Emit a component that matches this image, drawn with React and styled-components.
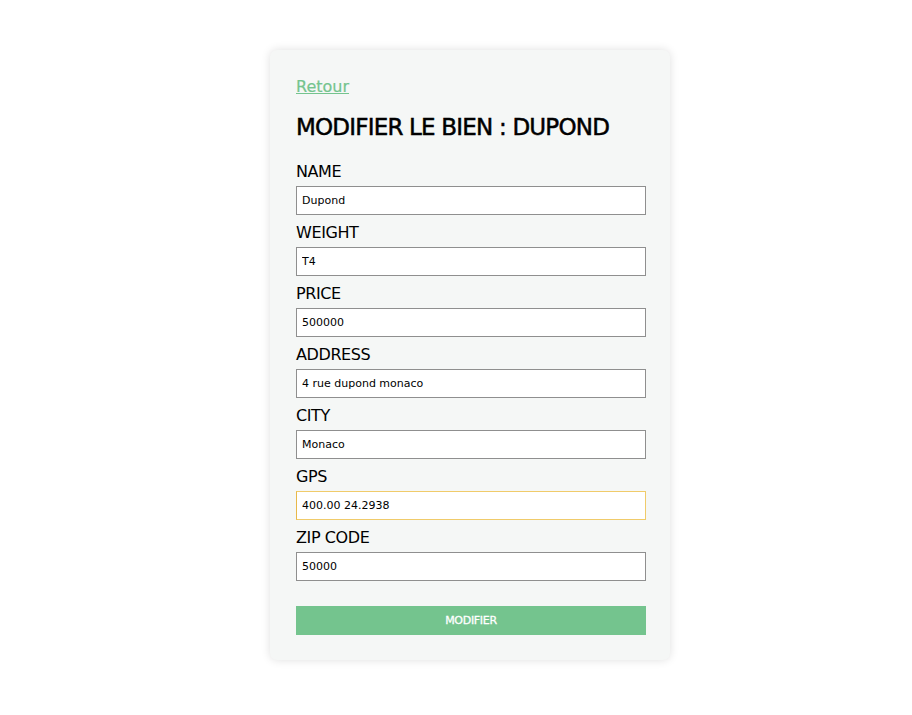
import React from 'react';
import styled, { createGlobalStyle } from 'styled-components';

const GlobalStyle = createGlobalStyle`
  body {
    margin: 0;
    background: #ffffff;
    font-family: "DejaVu Sans", "Noto Sans", sans-serif;
  }
`;

const Page = styled.div`
  display: flex;
  justify-content: center;
  padding: 50px 0 55px 28px;
`;

const Card = styled.div`
  width: 400px;
  box-sizing: border-box;
  padding: 25px 24px 25px 26px;
  background: #f5f7f6;
  border-radius: 7px;
  box-shadow: 0 0 10px rgba(0, 0, 0, 0.13);
`;

const BackLink = styled.a`
  display: inline-block;
  font-size: 16px;
  line-height: 23px;
  color: #74c48e;
  text-decoration: underline;
  -webkit-text-stroke: 0.2px #74c48e;
  cursor: pointer;
`;

const Title = styled.h1`
  margin: 11px 0 15px;
  font-size: 23px;
  line-height: 36px;
  font-weight: 500;
  letter-spacing: -0.8px;
  color: #000;
  -webkit-text-stroke: 0.5px #000;
`;

const Field = styled.div`
  display: flex;
  flex-direction: column;
  margin-bottom: 6px;
`;

const Label = styled.label`
  font-size: 16px;
  line-height: 24px;
  letter-spacing: -0.4px;
  color: #000;
  margin-bottom: 2px;
  text-transform: uppercase;
`;

const Input = styled.input`
  box-sizing: border-box;
  width: 100%;
  height: 29px;
  padding: 0 5px;
  border: 1px solid ${(p) => (p.$active ? '#f0cb6a' : '#8f8f8f')};
  border-left-color: ${(p) => (p.$active ? '#e8b94a' : '#8f8f8f')};
  background: #fff;
  font-family: inherit;
  font-size: 11px;
  color: #000;
  outline: none;
`;

const Submit = styled.button`
  display: block;
  width: 100%;
  height: 29px;
  margin-top: 25px;
  border: none;
  background: #74c48e;
  color: #fff;
  font-family: inherit;
  font-size: 11px;
  letter-spacing: -0.3px;
  text-transform: uppercase;
  -webkit-text-stroke: 0.3px #fff;
  cursor: pointer;
`;

const fields = [
  { label: 'Name', value: 'Dupond' },
  { label: 'Weight', value: 'T4' },
  { label: 'Price', value: '500000' },
  { label: 'Address', value: '4 rue dupond monaco' },
  { label: 'City', value: 'Monaco' },
  { label: 'GPS', value: '400.00 24.2938', active: true },
  { label: 'Zip code', value: '50000' },
];

export default function App() {
  return (
    <>
      <GlobalStyle />
      <Page>
        <Card>
          <BackLink>Retour</BackLink>
          <Title>MODIFIER LE BIEN : DUPOND</Title>
          {fields.map((f) => (
            <Field key={f.label}>
              <Label>{f.label}</Label>
              <Input defaultValue={f.value} $active={f.active} />
            </Field>
          ))}
          <Submit>Modifier</Submit>
        </Card>
      </Page>
    </>
  );
}
